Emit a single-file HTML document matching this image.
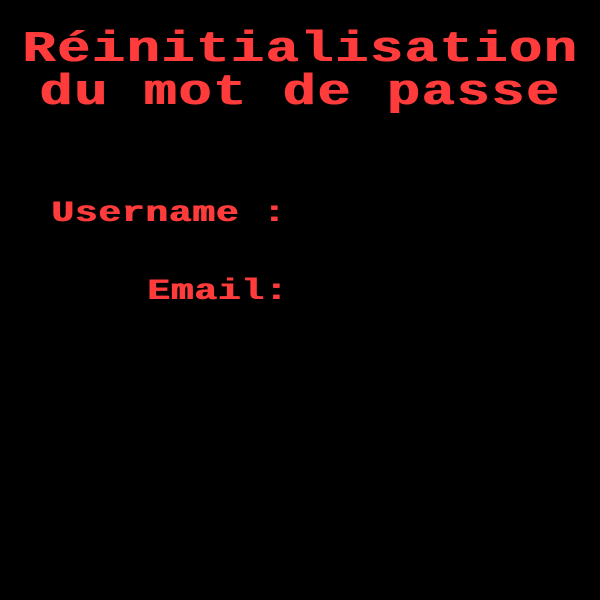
<!DOCTYPE html>
<html><head><meta charset="utf-8"><style>
html,body{margin:0;padding:0;background:#000;width:600px;height:600px;overflow:hidden}
div{position:absolute;font-family:"Liberation Mono",monospace;font-weight:bold;color:#ff3b3b;white-space:pre;line-height:1;transform-origin:0 0;transform:scaleX(1.25)}
.t{font-size:44px;letter-spacing:1.4px;text-shadow:1px 0 0 #ff3b3b}
.f{font-size:30px;letter-spacing:0.8px;text-shadow:1px 0 0 #ff3b3b}
</style></head><body>
<div class="t" style="left:22px;top:28px">Réinitialisation</div>
<div class="t" style="left:39px;top:71px">du mot de passe</div>
<div class="f" style="left:51px;top:199px">Username :</div>
<div class="f" style="left:147px;top:277px">Email:</div>
</body></html>
